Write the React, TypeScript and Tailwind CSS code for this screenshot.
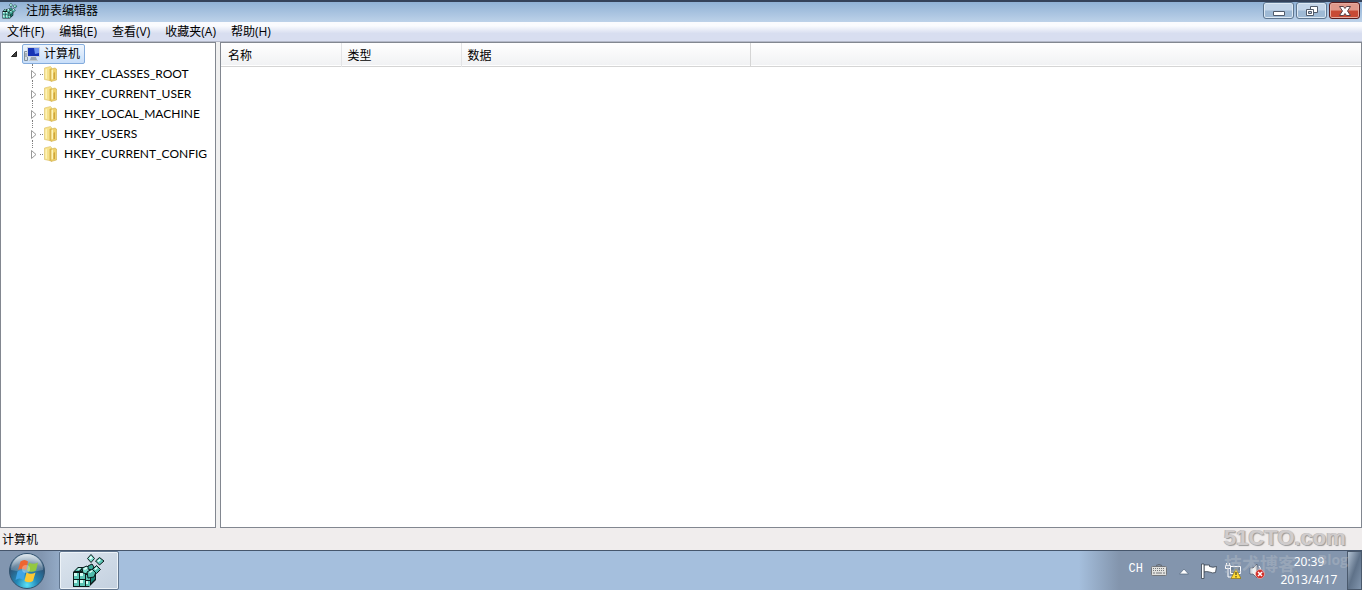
const menu = ['文件(F)', '编辑(E)', '查看(V)', '收藏夹(A)', '帮助(H)'];

const keys = [
  'HKEY_CLASSES_ROOT',
  'HKEY_CURRENT_USER',
  'HKEY_LOCAL_MACHINE',
  'HKEY_USERS',
  'HKEY_CURRENT_CONFIG',
];

const RegeditIcon = ({ className }: { className: string }) => (
  <svg className={className} viewBox="0 0 34 34">
    {/* cube body */}
    <path d="M1 18l5-5h15l3 4v9l-7 7H1z" fill="#0b1a1a" />
    <g fill="#5cc4b5">
      <path d="M2 19h5v6H2zM8 19h5v6H8zM2 26h5v6H2zM8 26h5v6H8zM14 27h4v5h-4zM14 21h4v5h-4z" />
      <path d="M3 17l3-3h4l-3 3zM9 17l3-3h4l-3 3z" />
    </g>
    <g fill="#d3fbf3">
      <path d="M2 19h3v3H2zM8 19h3v3H8zM2 26h3v3H2zM8 26h3v3H8zM14 27h2v3h-2zM5 16l2-2h2l-2 2zM11 16l2-2h2l-2 2z" />
    </g>
    <path d="M19 24l4-3v4l-4 4z" fill="#178478" />
    {/* cubes breaking off the corner */}
    <g stroke="#0b1a1a" strokeWidth="1">
      <path d="M10 14l5-2 3 3-2 5-5-1z" fill="#72d6c7" />
      <path d="M15 18l5-3 4 3-2 5-6 1z" fill="#4fbbab" />
      <path d="M16 12l4-2 2 3-2 3-4-1z" fill="#39ab9b" />
      <path d="M15.500 4.500l3.500-4 3.500 4-3.500 4z" fill="#7cdccd" />
      <path d="M23.500 7l4-3.500 4.500 3.500-4.500 4z" fill="#5cc7b7" />
      <path d="M20.500 15.500l4-4 4 4-4 4z" fill="#4fbbab" />
    </g>
    <path d="M17 4l2-2 1.500 2-2 1.500zM25 7l2.500-2 1.500 1-2.500 2zM22 15l2.500-2 1.500 1-2.500 2zM11 15l3-2 2 1-3 2zM17 18l3-2 1 1-3 2z" fill="#e2fff8" />
  </svg>
);

const ComputerIcon = () => (
  <svg className="h-4 w-4 shrink-0" viewBox="0 0 16 16">
    <path d="M.5 5.500h3v9h-3z" fill="#d8dde2" stroke="#80909c" />
    <path d="M1 8h2M1 10h2" stroke="#788490" />
    <path d="M3 1h13v10H3z" fill="#c9d0dc" />
    <path d="M4 2h11v8H4z" fill="#1734b5" />
    <path d="M10 2h5v5l-4 1z" fill="#6d92ee" />
    <path d="M7 11h5l1 3H6z" fill="#9ba6b1" />
    <path d="M5 14h9v1H5z" fill="#c3cad0" />
  </svg>
);

const FolderIcon = () => (
  <svg className="h-4 w-4 shrink-0" viewBox="0 0 16 16">
    <path d="M1.500 2l6-1.500 1 1V15l-7-1.500z" fill="#f6e28c" stroke="#dcbf64" strokeWidth=".6" />
    <path d="M8 3l4-1 1.500 1v11L8 15.500z" fill="#efd26c" stroke="#cfac49" strokeWidth=".6" />
    <path d="M6.500 3L8 2.500v12l-1.500.5z" fill="#d9b650" />
    <path d="M10.500 7l1.500-1v7l-1.500.5z" fill="#cfa63c" />
    <path d="M2.500 3.500L4 3v10l-1.500-.5zM8.500 4l1.500-.5V13l-1.500.5z" fill="#fdf3b8" />
  </svg>
);

const StartOrb = () => (
  <svg className="h-9 w-9" viewBox="0 0 36 36">
    <defs>
      <radialGradient id="orb" cx=".5" cy=".9" r=".85">
        <stop offset="0" stopColor="#5be2f7" />
        <stop offset=".35" stopColor="#2389b8" />
        <stop offset=".75" stopColor="#2c5478" />
        <stop offset="1" stopColor="#88a6bc" />
      </radialGradient>
      <linearGradient id="gloss" x2="0" y2="1">
        <stop offset="0" stopColor="#fff" stopOpacity=".7" />
        <stop offset="1" stopColor="#fff" stopOpacity=".15" />
      </linearGradient>
    </defs>
    <circle cx="18" cy="18" r="17.500" fill="url(#orb)" stroke="#33536f" />
    <path d="M2 17a16 16 0 0 1 32 0q-16 4-32 0z" fill="url(#gloss)" />
    <path d="M11.500 8.500q4-3 7.500 0l-2 8.500q-4-2.500-8 0z" fill="#ee6530" />
    <path d="M20 9.500q4 2.500 9 0l-2 8q-4.500 2.500-9 0z" fill="#94c83f" />
    <path d="M8.500 18.500q4-2.500 8 0l-2 8.500q-4-3-8 0z" fill="#3fa4e6" />
    <path d="M17.500 19.500q4.500 2.500 9 0l-2.500 8.500q-4 2.500-8.500 0z" fill="#fbc834" />
    <circle cx="17" cy="16" r="4" fill="#fff" opacity=".3" />
  </svg>
);

const CaptionButtons = () => (
  <div className="flex gap-0.5 pr-0.5">
    <button
      aria-label="最小化"
      className="flex h-[17px] w-[31px] items-center justify-center rounded-[3px] border border-[#5e7690] bg-linear-to-b from-[#c3d5e9] from-45% to-[#9fbad5] to-55% shadow-[inset_0_0_0_1px_#dce8f3]"
    >
      <svg className="h-3 w-3" viewBox="0 0 12 12">
        <path d="M.5 6.500h11v4H.5z" fill="#fff" stroke="#505b6b" />
      </svg>
    </button>
    <button
      aria-label="还原"
      className="flex h-[17px] w-[31px] items-center justify-center rounded-[3px] border border-[#5e7690] bg-linear-to-b from-[#c3d5e9] from-45% to-[#9fbad5] to-55% shadow-[inset_0_0_0_1px_#dce8f3]"
    >
      <svg className="h-3 w-3" viewBox="0 0 12 12" stroke="#505b6b">
        <path d="M4.500 1.500h7v6h-7z" fill="#fff" />
        <path d="M.5 4.500h7v6h-7z" fill="#fff" />
        <path d="M2.500 6.500h3v2h-3z" fill="#b8cbe0" />
      </svg>
    </button>
    <button
      aria-label="关闭"
      className="flex h-[17px] w-[31px] items-center justify-center rounded-[3px] border border-[#5b1d1d] bg-linear-to-b from-[#e0998b] from-45% to-[#c84a35] to-55% shadow-[inset_0_0_0_1px_#e6ab9f]"
    >
      <svg className="h-3 w-3" viewBox="0 0 12 12">
        <path d="M.5 1.500h4L6 3.500l1.500-2h4L8.500 6l3 4.500h-4L6 8.500l-1.500 2h-4l3-4.500z" fill="#fff" stroke="#5a4348" />
      </svg>
    </button>
  </div>
);

const TitleBar = () => (
  <header className="flex h-[22px] items-start justify-between border-t-2 border-[#34425a] bg-linear-to-b from-[#90b1d5] to-[#bdd2e9]">
    <div className="flex h-[18px] items-center gap-2 pl-0.5">
      <RegeditIcon className="h-4 w-4" />
      <h1>注册表编辑器</h1>
    </div>
    <CaptionButtons />
  </header>
);

const MenuBar = () => (
  <nav className="flex h-5 items-center gap-[15px] border-b border-[#b4b9c8] bg-linear-to-b from-[#fafbfe] from-20% to-[#d8def0] to-60% pl-[7px]">
    {menu.map((m) => (
      <button key={m}>{m}</button>
    ))}
  </nav>
);

const KeyTree = () => (
  <aside className="w-[216px] shrink-0 border border-[#828790] bg-white pt-px">
    <div className="flex h-5 items-center pl-2">
      <button aria-label="折叠" className="w-[13px]">
        <svg className="h-2.5 w-2.5" viewBox="0 0 10 10">
          <path d="M7.500 2.500v5h-5z" fill="#404040" stroke="#222" />
        </svg>
      </button>
      <button className="flex h-5 items-center gap-1 rounded-xs border border-[#84acdd] bg-linear-to-b from-[#eef5fd] to-[#c8def9] pr-1 pl-px">
        <ComputerIcon />
        计算机
      </button>
    </div>
    <ul className="ml-[29px]">
      {keys.map((k, i) => (
        <li key={k} className="relative flex h-5 items-center">
          {/* dotted connector up to the parent or previous key */}
          <span
            className={
              i === 0
                ? 'absolute top-0 left-0.5 h-1 border-l border-dotted border-[#808080]'
                : 'absolute -top-1 left-0.5 h-2 border-l border-dotted border-[#808080]'
            }
          />
          <button aria-label="展开" className="flex w-2 shrink-0 items-center">
            <svg className="h-[9px] w-[7px] shrink-0" viewBox="0 0 7 9">
              <path d="M1.500.5l4.500 4-4.500 4z" fill="#fff" stroke="#989898" />
            </svg>
          </button>
          <span className="ml-0.5 w-[3px] shrink-0 border-t border-dotted border-[#808080]" />
          <FolderIcon />
          <button className="pl-[5px] font-['Lato',sans-serif]">{k}</button>
        </li>
      ))}
    </ul>
  </aside>
);

const ValueList = () => (
  <main className="min-w-0 flex-1 border border-[#828790] bg-white">
    <table className="w-full table-fixed border-collapse">
      <thead>
        <tr className="h-[23px] border-b border-[#d5d5d5] bg-linear-to-b from-white to-[#f1f2f4] text-left">
          <th className="w-[120px] border-r border-[#e3e4e6] px-[7px] pt-1 font-normal">名称</th>
          <th className="w-[120px] border-r border-[#e3e4e6] px-1.5 pt-1 font-normal">类型</th>
          <th className="w-[289px] border-r border-[#d5d5d5] px-1.5 pt-1 font-normal">数据</th>
          <td />
        </tr>
      </thead>
    </table>
  </main>
);

const Tray = () => (
  <div className="flex items-center bg-linear-to-r from-[#a5bfdd] to-[#8395ad] to-[40px] pl-[50px] text-white">
    <span className="pb-1 font-['Liberation_Mono',monospace] text-xs">CH</span>
    <button aria-label="键盘" className="ml-2">
      <svg className="h-4 w-4" viewBox="0 0 16 16">
        <path d="M5 2.500q3-2 6 0" fill="none" stroke="#61666d" />
        <rect x=".5" y="3.500" width="15" height="9" rx="1" fill="#e1e1de" stroke="#74777b" />
        <path d="M2 5.500h12M2 7.500h12" stroke="#77797c" strokeDasharray="1 1" />
        <path d="M2 10h12" stroke="#77797c" strokeDasharray="2 1 6 1" />
      </svg>
    </button>
    <button aria-label="显示隐藏的图标" className="ml-3">
      <svg className="h-2.5 w-2.5" viewBox="0 0 10 10">
        <path d="M.5 8l4.500-5 4.500 5z" fill="#fff" stroke="#51657c" strokeWidth=".7" />
      </svg>
    </button>
    <button aria-label="操作中心" className="ml-3">
      <svg className="h-4 w-4" viewBox="0 0 16 16" fill="#fff" stroke="#39434f" strokeWidth=".8">
        <path d="M3 2h5.500v1.500Q12 5 15.500 3.500l-1 6q-3 1-6-.5Q5 8 3 9z" />
        <path d="M.5 1H3v14.500H.5z" />
      </svg>
    </button>
    <button aria-label="网络" className="ml-2">
      <svg className="h-4 w-4" viewBox="0 0 16 16">
        <path d="M5.500 3.500h10v7h-10z" fill="#6f8092" stroke="#fff" />
        <path d="M1.500 0v2M4.500 0v2M.500 2.500h5v3h-5zM3 5v9h6" fill="none" stroke="#fff" />
        <path d="M11 6l5 9.500H6z" fill="#ffdb34" stroke="#8f7415" strokeWidth=".7" />
        <path d="M11 9v3M11 13v1.500" stroke="#222" />
      </svg>
    </button>
    <button aria-label="音量" className="ml-2">
      <svg className="h-4 w-4" viewBox="0 0 16 16">
        <path d="M1 5h3l4-4v14l-4-4H1z" fill="#eee" stroke="#4d5866" strokeWidth=".7" />
        <path d="M10 3q2 2 1 4" fill="none" stroke="#fff" />
        <circle cx="11" cy="11" r="4.500" fill="#d22b24" stroke="#f5c2bf" strokeWidth=".6" />
        <path d="M9 9l4 4m0-4l-4 4" stroke="#fff" strokeWidth="1.500" />
      </svg>
    </button>
    <div className="ml-3 w-[64px] text-center leading-[18px] font-['Noto_Sans',sans-serif]">
      <div>20:39</div>
      <div>2013/4/17</div>
    </div>
    <button
      aria-label="显示桌面"
      className="ml-1.5 h-full w-[15px] border border-[#4a596c] bg-linear-to-br from-[#b4c3d3] via-[#5f7289] to-[#8296ae]"
    />
  </div>
);

const TaskBar = () => (
  <footer className="flex h-10 justify-between border-t border-[#46566c] bg-[#a5bfdd]">
    <div className="flex">
      <div className="flex w-[59px] items-center bg-linear-to-r from-[#8296b0] from-70% to-[#93aac6] pl-[9px]">
        <button aria-label="开始">
          <StartOrb />
        </button>
      </div>
      <button
        aria-label="注册表编辑器"
        className="flex w-[60px] items-center justify-center rounded-xs border border-[#61768f] bg-linear-to-br from-[#dce5ee] to-[#c3d0df] shadow-[inset_0_0_0_1px_#edf3f8]"
      >
        <RegeditIcon className="h-[34px] w-[34px]" />
      </button>
    </div>
    <Tray />
  </footer>
);

const Watermark = () => (
  <div className="pointer-events-none absolute right-3 bottom-3 w-[126px] font-bold">
    <div className="font-['Liberation_Sans',sans-serif] text-[22px] leading-6 text-[#d0cccc] [text-shadow:1px_1px_1px_#999,-1px_0_0_#bbb]">
      51CTO.com
    </div>
    <div className="flex items-center justify-between text-lg leading-5 text-[#b4bcc8]/45">
      <span>技术博客</span>
      <span className="pr-0.5 pb-2 text-sm">Blog</span>
    </div>
  </div>
);

export default function App() {
  return (
    <div className="relative flex h-screen flex-col overflow-hidden bg-[#f0eded] font-['Open_Sans','Noto_Sans_CJK_SC',sans-serif] text-xs text-black">
      <TitleBar />
      <MenuBar />
      <div className="flex flex-1 gap-1 bg-[#f0f0f0]">
        <KeyTree />
        <ValueList />
      </div>
      <div className="flex h-[22px] items-center bg-[#f0eded] pt-px pl-0.5">计算机</div>
      <TaskBar />
      <Watermark />
    </div>
  );
}
